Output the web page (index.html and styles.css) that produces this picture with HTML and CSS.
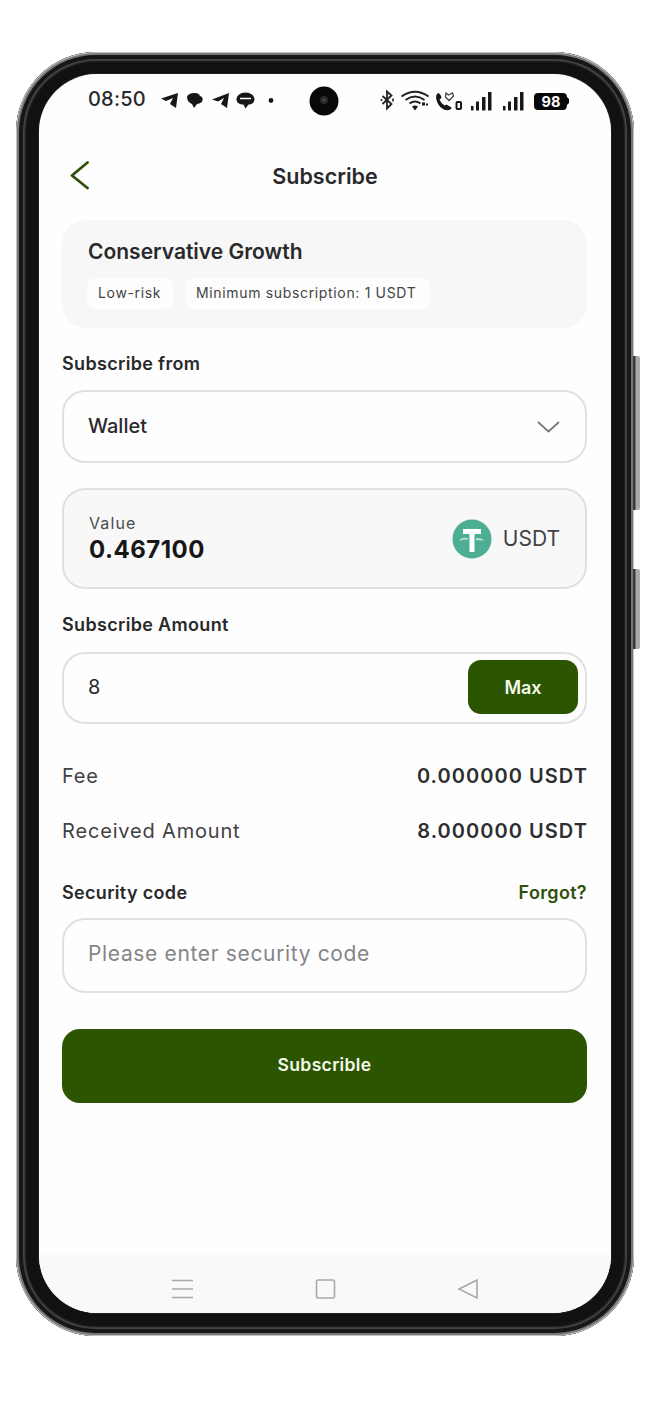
FILE: index.html
```html
<!DOCTYPE html>
<html lang="en">
<head>
<meta charset="utf-8">
<title>Subscribe</title>
<link rel="stylesheet" href="styles.css">
</head>
<body>
<main class="phone">
  <i class="side-key volume"></i>
  <i class="side-key power"></i>
  <div class="screen">
    <div class="status">
      <span class="clock">08:50</span>
      <svg class="notices" width="116" height="24" viewBox="0 0 116 24">
        <path d="M1 10.500 18 5 16 20 10 16 13 10 6 13Z"/>
        <path d="M27 9Q28 5 35 5Q39 5 40 8Q44 9 42 14Q39 16 37 16L34 20 32 16Q27 14 27 9Z"/>
        <path d="M52 11.500 69 5 67 20 61 16 64 10 58 13.500Z"/>
        <path d="M85.500 4.500c5 0 9 3 9 7 0 3-3 5-6 5l-3 4-2-4c-4 0-7-2-7-5 0-4 4-7 9-7Z"/>
        <path d="M80 10.500h11" stroke="#fff" stroke-width="1.6"/>
        <circle cx="111" cy="12.500" r="2.4"/>
      </svg>
      <svg class="camera" width="30" height="30" viewBox="0 0 30 30">
        <circle cx="15" cy="15" r="14.500"/><circle cx="15" cy="14" r="4" fill="#292929"/><circle cx="15" cy="14" r="1.600" fill="#4b4b4b"/>
      </svg>
      <svg class="signals" width="192" height="26" viewBox="0 0 192 26">
        <path d="m2.500 8 9 8-4.500 4.500v-17l4.500 4-9 8.500" fill="none" stroke="#222" stroke-width="1.800"/>
        <path d="M1.500 11v2M13 10.500v3" stroke="#222" stroke-width="1.600"/>
        <g fill="none" stroke="#222" stroke-width="1.900"><path d="M21.500 8.500q13.500-9.500 27 0M25.500 12q9.500-7 19 0M29.500 15.500q5.500-4 11 0"/></g>
        <path d="m32 18.500 3 4 3-4q-3-2-6 0Z"/><path d="M42 14.500h3v3h-3zM46 15.500h2v2h-2z"/>
        <path d="M58 5q3 1 3.500 5l-2 1.500q2 4.500 5 6l2-1 5 3q0 2-3 2.500-6 1-10.500-6-4-8 0-11Z"/>
        <path d="m66 5 2.500 2 4-2 1 3-4.500 4.500-3.500-3.500Z" fill="none" stroke="#444" stroke-width="1.300"/>
        <rect x="76.500" y="14" width="4.500" height="7" rx="1" fill="none" stroke="#171717" stroke-width="2"/>
        <g><rect x="91" y="18" width="2.500" height="4.500"/><rect x="96" y="13.500" width="3" height="9"/><rect x="102" y="9" width="3.500" height="13.500"/><rect x="108" y="4" width="3.500" height="18.500"/></g>
        <g><rect x="123" y="18" width="2.500" height="4.500"/><rect x="128" y="13.500" width="3" height="9"/><rect x="134" y="9" width="3.500" height="13.500"/><rect x="140" y="4" width="3.500" height="18.500"/></g>
        <path d="M158 5h25q4 0 4 4l2 2v4l-2 2q0 5-4 5h-25q-4 0-4-4V9q0-4 4-4Z" fill="#080808"/>
        <text class="battery" x="171" y="19" text-anchor="middle" textLength="19">98</text>
      </svg>
    </div>

    <header class="header">
      <svg class="back" width="20" height="30" viewBox="0 0 20 30"><path d="M17.500 1.500 2 14.500 17.500 27"/></svg>
      <h1>Subscribe</h1>
    </header>

    <section class="content">
      <div class="plan">
        <h2>Conservative Growth</h2>
        <div class="tags"><span class="tag risk">Low-risk</span><span class="tag minimum">Minimum subscription: 1 USDT</span></div>
      </div>
      <div class="label from-label"><span>Subscribe from</span></div>
      <div class="field select"><span>Wallet</span>
        <svg width="24" height="14" viewBox="0 0 24 14"><path d="m1 2 10.500 9.500 10.500-9.500"/></svg>
      </div>
      <div class="field balance">
        <div class="amounts"><span class="value-label">Value</span><strong class="value">0.467100</strong></div>
        <div class="coin">
          <svg width="40" height="40" viewBox="0 0 40 40"><circle cx="20" cy="20" r="19.500" fill="#4eae94"/><path d="M11 12.500h18M20 12v21" fill="none" stroke="#fff" stroke-width="5"/><path d="M8 21q4-2 8-1M24 20q4 0 7 1" fill="none" stroke="#b9e1d6" stroke-width="1.800"/></svg>
          <span>USDT</span>
        </div>
      </div>
      <div class="label amount-label"><span>Subscribe Amount</span></div>
      <div class="field amount"><span>8</span><button class="max">Max</button></div>
      <div class="summary">
        <div class="row"><span>Fee</span><strong>0.000000 USDT</strong></div>
        <div class="row"><span>Received Amount</span><strong>8.000000 USDT</strong></div>
      </div>
      <div class="label security"><span>Security code</span><a class="forgot">Forgot?</a></div>
      <div class="field code"><span class="placeholder">Please enter security code</span></div>
      <button class="submit">Subscrible</button>
    </section>

    <nav class="system-nav">
      <svg width="22" height="22" viewBox="0 0 22 22"><path d="M1 2.500h21M1 11h21M1 19.500h21"/></svg>
      <svg width="22" height="22" viewBox="0 0 22 22"><rect x="2.500" y="2" width="18" height="18" rx="1.500"/></svg>
      <svg width="22" height="22" viewBox="0 0 22 22"><path d="M20 2v18L2 11Z"/></svg>
    </nav>
  </div>
</main>
</body>
</html>
```
FILE: styles.css
```css
* { box-sizing: border-box; }
body { margin: 0; width: 652px; height: 1412px; overflow: hidden; background: #fff; font-family: Inter, "Liberation Sans", sans-serif; color: #29292b; display: flex; align-items: flex-start; padding: 52px 0 0 16px; }
.phone { position: relative; width: 618px; height: 1284px; flex: none; padding: 22px 23px; border-radius: 80px; background: #111; box-shadow: inset 0 0 0 1px #c4c4c6, inset 0 0 0 3px #77777b, inset 0 0 0 7px #171717, inset 0 0 2px 9px #4a4a4a; }
.screen { width: 572px; height: 1239px; border-radius: 58px; overflow: hidden; background: #fefefe; display: flex; flex-direction: column; box-shadow: 0 0 1px #aaa; }
.side-key { position: absolute; left: 617px; width: 7px; background: linear-gradient(90deg, #3a3638 0 2px, #aaa 3px); border-radius: 0 2px 2px 0; }
.volume { top: 304px; height: 154px; }
.power { top: 517px; height: 80px; }
span, strong, a, h1, h2, button { white-space: nowrap; }
svg { flex: none; }

.status { height: 58px; padding-left: 49px; display: flex; align-items: flex-start; fill: #171717; }
.clock { width: 72px; padding-top: 13px; font-size: 20px; line-height: 24px; font-weight: 500; letter-spacing: .2px; }
.notices { margin-top: 14px; }
.camera { margin: 12px 0 0 33px; fill: #080808; }
.signals { margin: 14px 0 0 41px; }
.battery { font-size: 14.5px; font-weight: 700; fill: #fff; }

.header { height: 88px; display: grid; grid-template-columns: 40px 1fr 40px; align-items: center; padding: 0 31px; }
.back path { fill: none; stroke: #2f5107; stroke-width: 2.8; stroke-linecap: round; stroke-linejoin: round; }
h1 { margin: 0; text-align: center; font-size: 21.5px; line-height: 28px; font-weight: 600; }

.content { padding: 0 24px 0 23px; display: flex; flex-direction: column; }
.plan { height: 108px; border-radius: 24px; background: #f7f7f7; padding: 19px 25px; display: flex; flex-direction: column; gap: 13px; }
h2 { margin: 0; padding-left: 1px; font-size: 21px; line-height: 26px; font-weight: 600; }
.tags { display: flex; gap: 12px; }
.tag { height: 31px; line-height: 30px; border-radius: 8px; background: #fdfdfd; font-size: 14px; letter-spacing: .66px; padding-left: 11px; color: #444; }
.risk { width: 86px; }
.minimum { width: 245px; }
.label { height: 62px; padding-top: 8px; display: flex; align-items: center; justify-content: space-between; font-size: 18px; line-height: 24px; font-weight: 600; letter-spacing: .33px; }
.from-label { padding-top: 10px; }
.field { border: 2px solid #e0e0e1; border-radius: 23px; background: #fefefe; display: flex; align-items: center; justify-content: space-between; padding: 0 24px; font-size: 20px; line-height: 26px; }
.select { height: 73px; padding-bottom: 2px; font-weight: 500; }
.select svg { fill: none; stroke: #77777b; stroke-width: 1.7; position: relative; top: 1px; }
.balance { height: 101px; margin-top: 25px; background: #f8f8f8; }
.amounts { display: flex; flex-direction: column; padding-left: 1px; }
.value-label { font-size: 16px; line-height: 22px; letter-spacing: 1.1px; color: #4b4b4d; }
.value { font-size: 24px; line-height: 32px; letter-spacing: .5px; color: #171718; }
.coin { display: flex; align-items: center; gap: 11px; padding-right: 1px; font-size: 21px; color: #414144; }
.amount-label { height: 63px; }
.amount { height: 72px; padding: 0 7px 2px 24px; }
.max, .submit { border: 0; padding: 0; background: #2b5500; color: #f5f8ec; font-family: inherit; font-weight: 600; }
.max { width: 110px; height: 54px; border-radius: 13px; font-size: 18px; }
.summary { padding-top: 24px; }
.row { height: 55px; display: flex; align-items: center; justify-content: space-between; font-size: 20px; line-height: 26px; letter-spacing: .83px; color: #414144; }
.row strong { font-weight: 600; letter-spacing: 1.05px; margin-right: -1px; color: #2e2e31; }
.security { height: 60px; padding-top: 9px; }
.forgot { color: #2e4f0b; }
.code { height: 75px; padding-bottom: 3px; }
.placeholder { font-size: 21px; letter-spacing: .65px; color: #858588; }
.submit { height: 74px; margin-top: 36px; padding-bottom: 3px; border-radius: 18px; font-size: 17.5px; letter-spacing: .35px; }

.system-nav { height: 58px; margin-top: auto; background: #f9f9f9; display: flex; align-items: center; gap: 121px; padding: 9px 0 0 132px; fill: none; stroke: #a9a9ab; stroke-width: 1.6; }
```
